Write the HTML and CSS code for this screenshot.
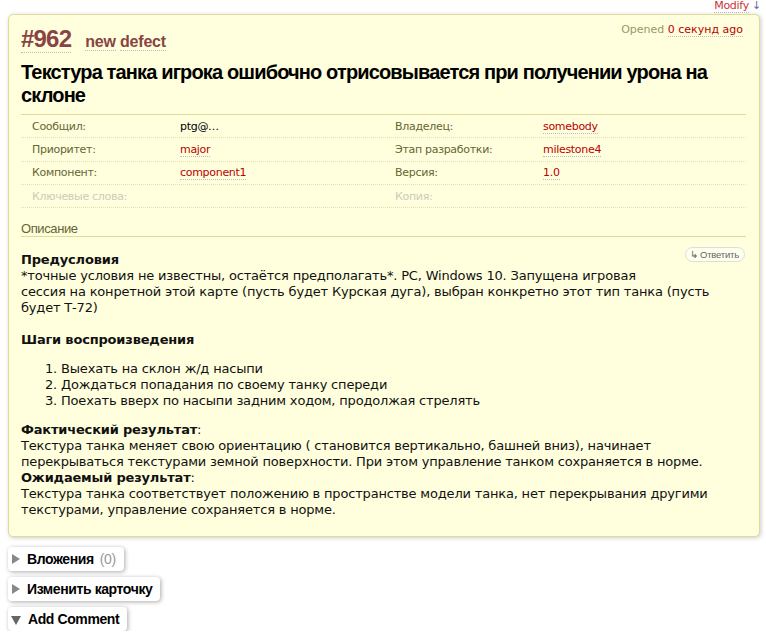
FILE: index.html
```html
<!DOCTYPE html>
<html lang="ru">
<head>
<meta charset="utf-8">
<title>#962 Текстура танка</title>
<link rel="stylesheet" href="styles.css">
</head>
<body>
<div class="topnav"><a class="lnk" href="#">Modify</a> <span class="arrow">↓</span></div>

<div class="ticket">
  <div class="head">
    <h2 class="tid"><a class="trac-id" href="#">#962</a><span class="type"><span class="dot">new</span> <span class="dot">defect</span></span></h2>
    <div class="date">Opened <a class="lnk" href="#">0 секунд ago</a></div>
  </div>
  <h1 class="summary">Текстура танка игрока ошибочно отрисовывается при получении урона на склоне</h1>

  <div class="props">
    <div class="row">
      <div class="th">Сообщил:</div><div class="td plain">ptg@…</div>
      <div class="th">Владелец:</div><div class="td"><a class="lnk" href="#">somebody</a></div>
    </div>
    <div class="row">
      <div class="th">Приоритет:</div><div class="td"><a class="lnk" href="#">major</a></div>
      <div class="th">Этап разработки:</div><div class="td"><a class="lnk" href="#">milestone4</a></div>
    </div>
    <div class="row">
      <div class="th">Компонент:</div><div class="td"><a class="lnk" href="#">component1</a></div>
      <div class="th">Версия:</div><div class="td"><a class="lnk" href="#">1.0</a></div>
    </div>
    <div class="row">
      <div class="th missing">Ключевые слова:</div><div class="td"></div>
      <div class="th missing">Копия:</div><div class="td"></div>
    </div>
  </div>

  <h3 class="desc-title">Описание</h3>
  <div class="desc">
    <span class="reply">↳ Ответить</span>
    <p class="p1"><strong>Предусловия</strong><br>*точные условия не известны, остаётся предполагать*. PC, Windows 10. Запущена игровая<br>сессия на конретной этой карте (пусть будет Курская дуга), выбран конкретно этот тип танка (пусть<br>будет Т-72)</p>
    <p class="p2"><strong>Шаги воспроизведения</strong></p>
    <ol>
      <li>Выехать на склон ж/д насыпи</li>
      <li>Дождаться попадания по своему танку спереди</li>
      <li>Поехать вверх по насыпи задним ходом, продолжая стрелять</li>
    </ol>
    <p class="p3"><strong>Фактический результат</strong>:<br>Текстура танка меняет свою ориентацию ( становится вертикально, башней вниз), начинает<br>перекрываться текстурами земной поверхности. При этом управление танком сохраняется в норме.<br><strong>Ожидаемый результат</strong>:<br>Текстура танка соответствует положению в пространстве модели танка, нет перекрывания другими<br>текстурами, управление сохраняется в норме.</p>
  </div>
</div>

<div class="folds">
  <div class="fold"><span class="tri right"></span><span class="ftitle">Вложения</span><span class="count">(0)</span></div>
  <div class="fold"><span class="tri right"></span><span class="ftitle">Изменить карточку</span></div>
  <div class="fold"><span class="tri down"></span><span class="ftitle">Add Comment</span></div>
</div>
</body>
</html>
```

FILE: styles.css
```css
html, body {
  margin: 0;
  padding: 0;
  background: #fff;
}
body {
  font-family: "DejaVu Sans", Verdana, sans-serif;
  font-size: 13px;
  color: #000;
}
a { text-decoration: none; }
.lnk {
  color: #b00;
  border-bottom: 1px dotted #bbb;
}
.topnav {
  height: 14px;
  line-height: 12px;
  font-size: 11px;
  letter-spacing: -0.3px;
  text-align: right;
  padding-right: 5px;
}
.topnav .lnk { color: #c33; }
.topnav .arrow { color: #66a; }

.ticket {
  margin: 0 6px 0 8px;
  background: #ffd;
  border: 1px solid #dd9;
  border-radius: 5px;
  box-shadow: 1px 1px 4px 0 #ccc;
  padding: 10px 13px 18px 12px;
}
.head {
  display: flex;
  justify-content: space-between;
  align-items: flex-start;
}
.tid {
  margin: 0;
  font-family: "Liberation Sans", Arial, sans-serif;
  font-weight: bold;
  font-size: 24px;
  line-height: normal;
  color: #844;
}
.trac-id {
  color: #844;
  letter-spacing: -0.8px;
  border-bottom: 1px dotted #bbb;
}
.type {
  font-size: 16px;
  margin-left: 14px;
  letter-spacing: -0.2px;
}
.dot { border-bottom: 1px dotted #bbb; }
.date {
  font-size: 11px;
  color: #996;
  margin-top: -2px;
  margin-right: 3px;
}
.summary {
  margin: 8px 0 0;
  font-family: "Liberation Sans", Arial, sans-serif;
  font-size: 20px;
  font-weight: bold;
  line-height: 23px;
  letter-spacing: -0.85px;
}
.props {
  margin-top: 7px;
  border-top: 1px solid #dd9;
  font-size: 11px;
  letter-spacing: -0.3px;
}
.row {
  display: grid;
  grid-template-columns: 159px 204px 159px 1fr;
  height: 22.3px;
  align-items: center;
  border-bottom: 1px dotted #e6e2b0;
}
.th {
  padding-left: 11px;
  color: #663;
}
.th.missing { color: #ccb; }
.td.plain { color: #000; }

.desc-title {
  margin: 13px 0 0;
  font-family: "Liberation Sans", Arial, sans-serif;
  font-size: 13px;
  font-weight: normal;
  line-height: 15px;
  letter-spacing: -0.4px;
  color: #663;
  border-bottom: 1px solid #dd9;
}
.desc {
  margin-top: 15px;
  line-height: 16px;
  letter-spacing: -0.18px;
  color: #111;
}
.reply {
  float: right;
  margin-top: -5px;
  margin-right: 1px;
  font-family: "Liberation Sans", Arial, sans-serif;
  font-size: 9.5px;
  line-height: 13px;
  letter-spacing: -0.2px;
  color: #666;
  border: 1px solid #ddd;
  border-radius: 8px;
  padding: 0 5px 0 4px;
  background: #ffe;
}
.desc p { margin: 0; }
.desc .p1 { margin-bottom: 16px; }
.desc .p2 { margin-bottom: 13px; }
.desc ol {
  margin: 0 0 13px;
  padding-left: 40px;
}

.folds {
  margin: 10px 0 0 8px;
  display: flex;
  flex-direction: column;
  align-items: flex-start;
  gap: 6px;
}
.fold {
  display: flex;
  align-items: center;
  height: 24px;
  padding: 0 8px 0 3px;
  background: #fff;
  border-radius: 4px;
  box-shadow: 1px 1px 4px 0 #aaa;
  font-family: "Liberation Sans", Arial, sans-serif;
  font-size: 14px;
  letter-spacing: -0.4px;
}
.tri {
  display: inline-block;
  width: 0;
  height: 0;
  margin-right: 7px;
}
.tri.right {
  margin-left: 1px;
  border-top: 5px solid transparent;
  border-bottom: 5px solid transparent;
  border-left: 8px solid #888;
  margin-right: 7px;
}
.tri.down {
  border-left: 5px solid transparent;
  border-right: 5px solid transparent;
  border-top: 9px solid #666;
  margin-top: 2px;
}
.ftitle {
  font-weight: bold;
  color: #000;
}
.count {
  color: #999;
  margin-left: 6px;
}
```
